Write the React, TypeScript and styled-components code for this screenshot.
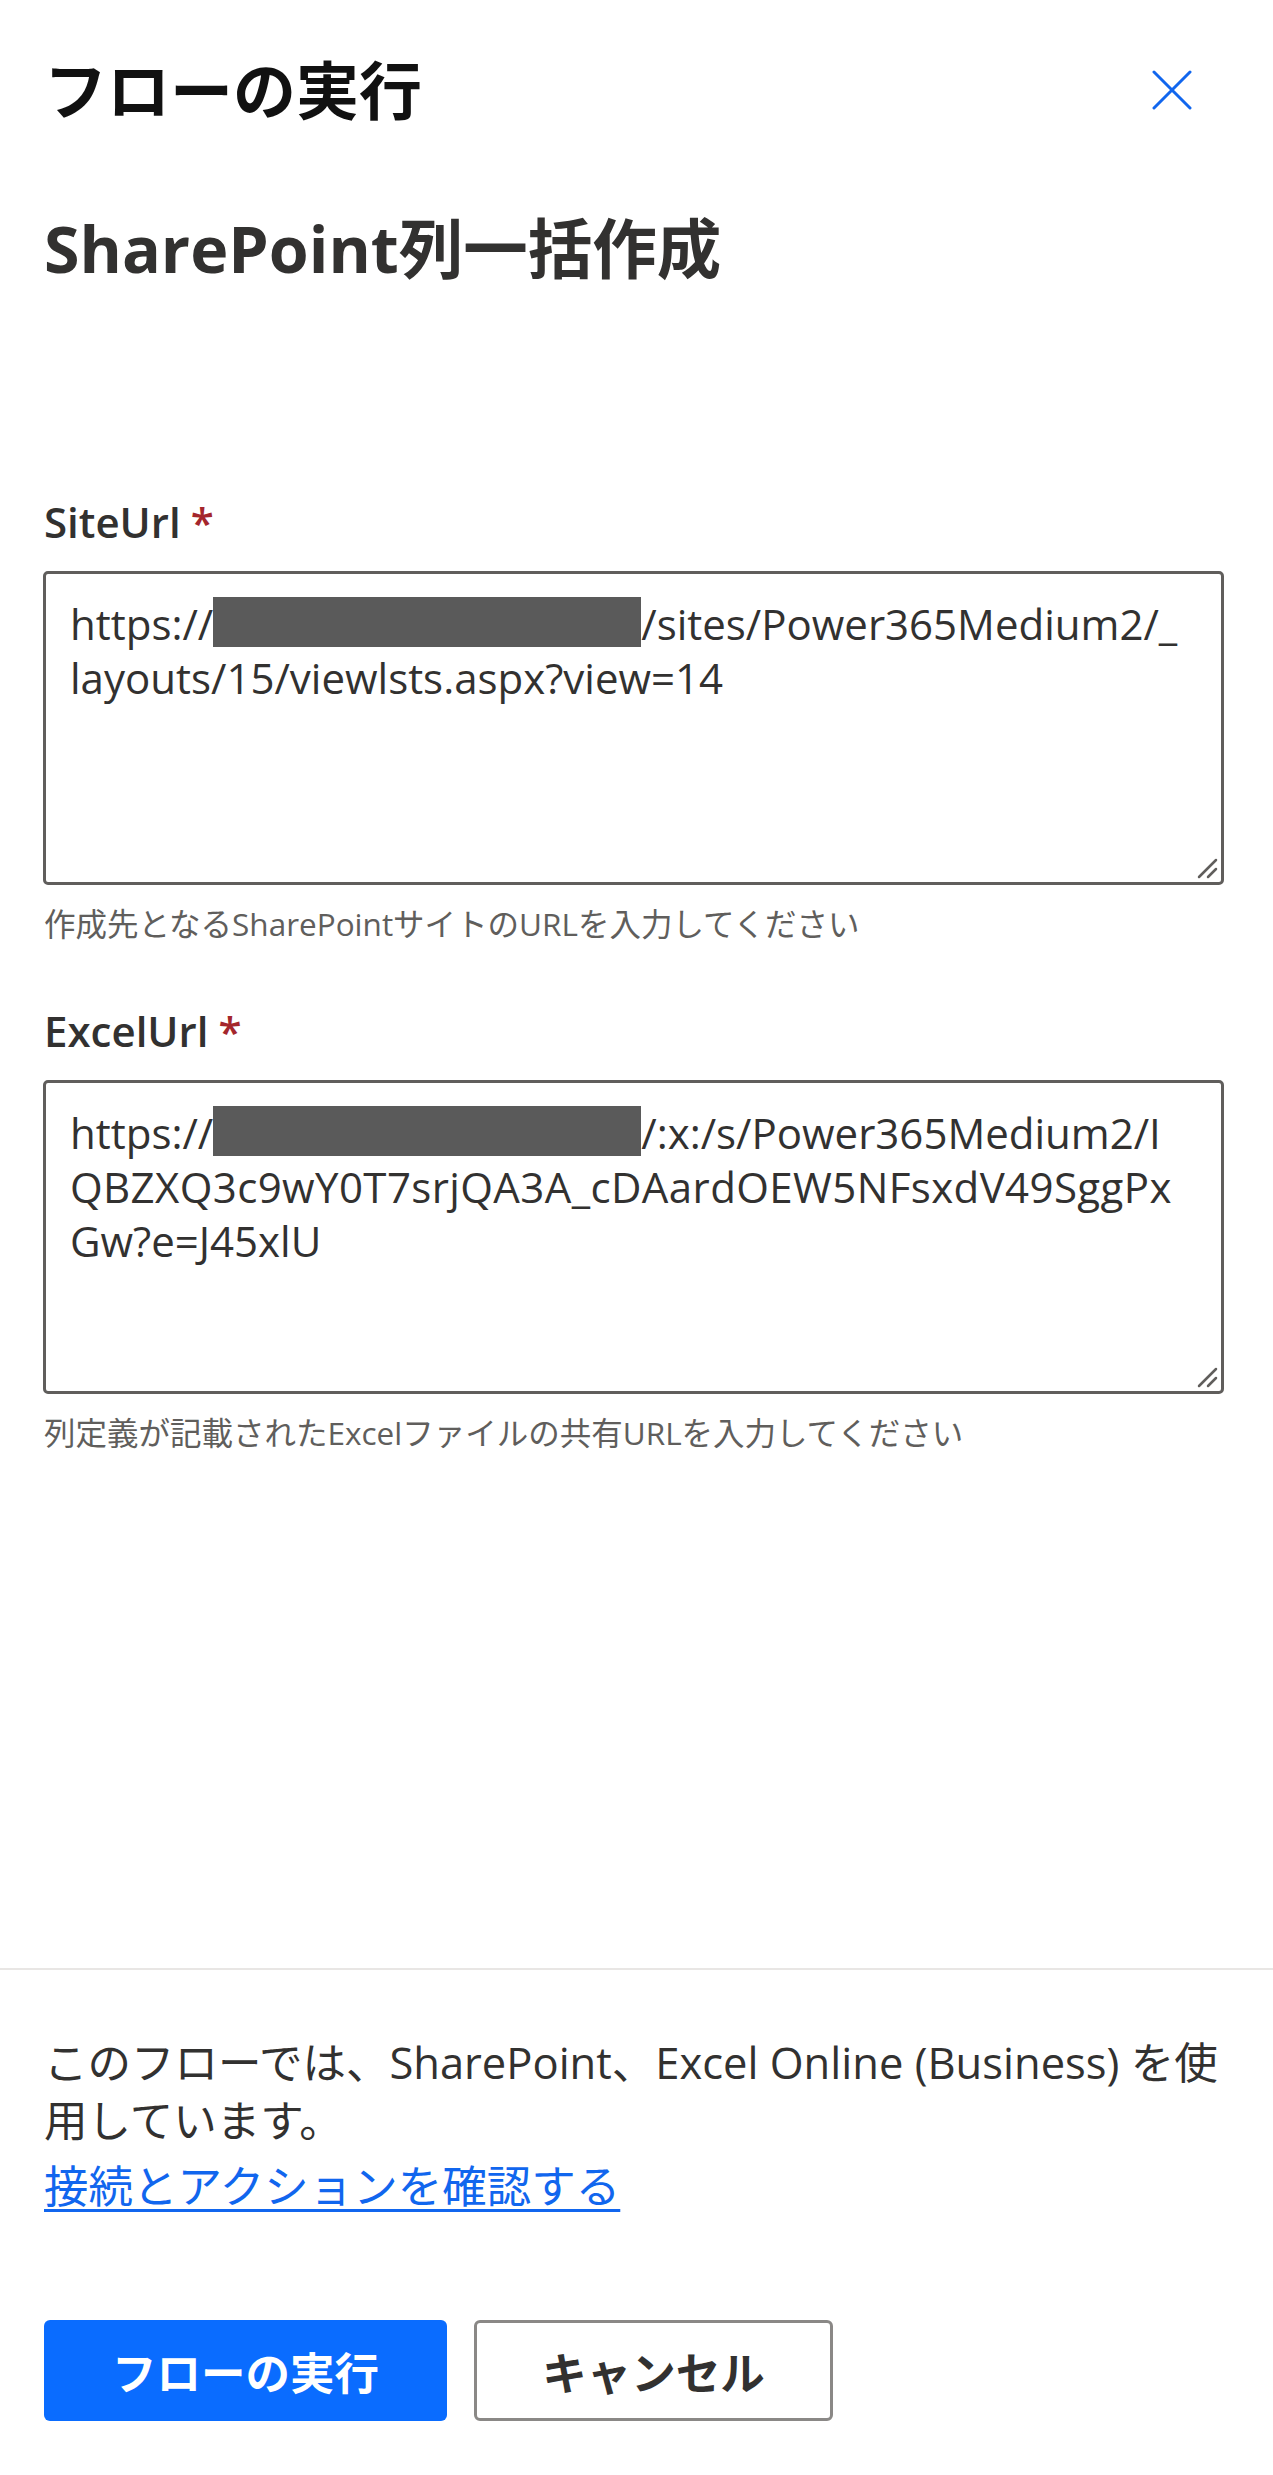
import React from "react";
import styled, { createGlobalStyle } from "styled-components";

const GlobalStyle = createGlobalStyle`
  html, body {
    margin: 0;
    padding: 0;
    background: #ffffff;
  }
  body {
    font-family: "Open Sans", "Noto Sans CJK JP", sans-serif;
    color: #323130;
  }
  * {
    box-sizing: border-box;
  }
`;

const Panel = styled.div`
  min-height: 100vh;
  display: flex;
  flex-direction: column;
  background: #ffffff;
`;

const Header = styled.div`
  display: flex;
  align-items: center;
  justify-content: space-between;
  padding: 50px 53px 0 44px;
`;

const PanelTitle = styled.h1`
  margin: 0;
  font-size: 63px;
  line-height: 80px;
  font-weight: 700;
  color: #111111;
`;

const CloseButton = styled.button`
  width: 96px;
  height: 80px;
  display: flex;
  align-items: center;
  justify-content: center;
  border: none;
  background: transparent;
  padding: 0;
  cursor: pointer;
`;

const Content = styled.div`
  flex: 1;
  padding: 0 49px 0 43px;
`;

const FlowName = styled.h2`
  margin: 78px 0 0 1px;
  font-size: 64.5px;
  line-height: 80px;
  font-weight: 700;
  color: #323130;
`;

const Field = styled.div<{ $first?: boolean }>`
  margin-top: ${({ $first }) => ($first ? "206px" : "59px")};
`;

const Label = styled.label`
  display: block;
  font-size: 42px;
  line-height: 56px;
  font-weight: 600;
  color: #323130;
  padding-left: 1px;
`;

const Required = styled.span`
  color: #a4262c;
  margin-left: 10px;
`;

const TextBox = styled.div`
  position: relative;
  margin-top: 21px;
  height: 314px;
  border: 3px solid #605e5c;
  border-radius: 5px;
  padding: 23px 24px;
  font-size: 42px;
  line-height: 54px;
  color: #323130;
`;

const Line = styled.div<{ $wide?: boolean }>`
  white-space: nowrap;
  letter-spacing: ${({ $wide }) => ($wide ? "0.4px" : "0")};
`;

const Redacted = styled.span`
  display: inline-block;
  width: 428px;
  height: 50px;
  vertical-align: top;
  background: #5a5a5a;
`;

const Grip = styled.svg`
  position: absolute;
  right: 3px;
  bottom: 3px;
`;

const Hint = styled.div`
  margin-top: 19px;
  font-size: 31.5px;
  line-height: 40px;
  color: #605e5c;
  padding-left: 1px;
`;

const Footer = styled.div`
  border-top: 2px solid #e8e6e4;
  padding: 64px 44px 54px 44px;
`;

const Notice = styled.p`
  margin: 0;
  font-size: 43.5px;
  line-height: 58px;
  color: #323130;
`;

const NoticeLine = styled.span`
  display: block;
  white-space: nowrap;
`;

const ReviewLink = styled.a`
  display: inline-block;
  margin-top: 7px;
  font-size: 44.5px;
  line-height: 58px;
  color: #1166ee;
  text-decoration: underline;
  text-underline-offset: 6px;
  text-decoration-thickness: 3px;
`;

const Actions = styled.div`
  display: flex;
  gap: 27px;
  margin-top: 105px;
`;

const Button = styled.button<{ $primary?: boolean }>`
  height: 101px;
  width: ${({ $primary }) => ($primary ? "403px" : "359px")};
  border-radius: 6px;
  border: ${({ $primary }) => ($primary ? "none" : "3px solid #8a8886")};
  background: ${({ $primary }) => ($primary ? "#0a6cff" : "#ffffff")};
  color: ${({ $primary }) => ($primary ? "#ffffff" : "#323130")};
  font-family: inherit;
  font-size: 44.5px;
  font-weight: 700;
  cursor: pointer;
`;

const ResizeGrip = () => (
  <Grip width="22" height="22" viewBox="0 0 22 22">
    <path d="M3 20 L20 3 M12 20 L20 12" stroke="#605e5c" strokeWidth="2.5" strokeLinecap="round" />
  </Grip>
);

const App: React.FC = () => {
  return (
    <>
      <GlobalStyle />
      <Panel>
        <Header>
          <PanelTitle>フローの実行</PanelTitle>
          <CloseButton aria-label="閉じる">
            <svg width="40" height="40" viewBox="0 0 40 40">
              <path d="M2 2 L38 38 M38 2 L2 38" stroke="#1166ee" strokeWidth="3" strokeLinecap="round" />
            </svg>
          </CloseButton>
        </Header>

        <Content>
          <FlowName>SharePoint列一括作成</FlowName>

          <Field $first>
            <Label>
              SiteUrl<Required>*</Required>
            </Label>
            <TextBox>
              <Line>
                https://<Redacted />/sites/Power365Medium2/_
              </Line>
              <Line>layouts/15/viewlsts.aspx?view=14</Line>
              <ResizeGrip />
            </TextBox>
            <Hint>作成先となるSharePointサイトのURLを入力してください</Hint>
          </Field>

          <Field>
            <Label>
              ExcelUrl<Required>*</Required>
            </Label>
            <TextBox>
              <Line>
                https://<Redacted />/:x:/s/Power365Medium2/I
              </Line>
              <Line $wide>QBZXQ3c9wY0T7srjQA3A_cDAardOEW5NFsxdV49SggPx</Line>
              <Line>Gw?e=J45xlU</Line>
              <ResizeGrip />
            </TextBox>
            <Hint>列定義が記載されたExcelファイルの共有URLを入力してください</Hint>
          </Field>
        </Content>

        <Footer>
          <Notice>
            <NoticeLine>このフローでは、SharePoint、Excel Online (Business) を使</NoticeLine>
            <NoticeLine>用しています。</NoticeLine>
          </Notice>
          <ReviewLink href="#">接続とアクションを確認する</ReviewLink>
          <Actions>
            <Button $primary>フローの実行</Button>
            <Button>キャンセル</Button>
          </Actions>
        </Footer>
      </Panel>
    </>
  );
};

export default App;
